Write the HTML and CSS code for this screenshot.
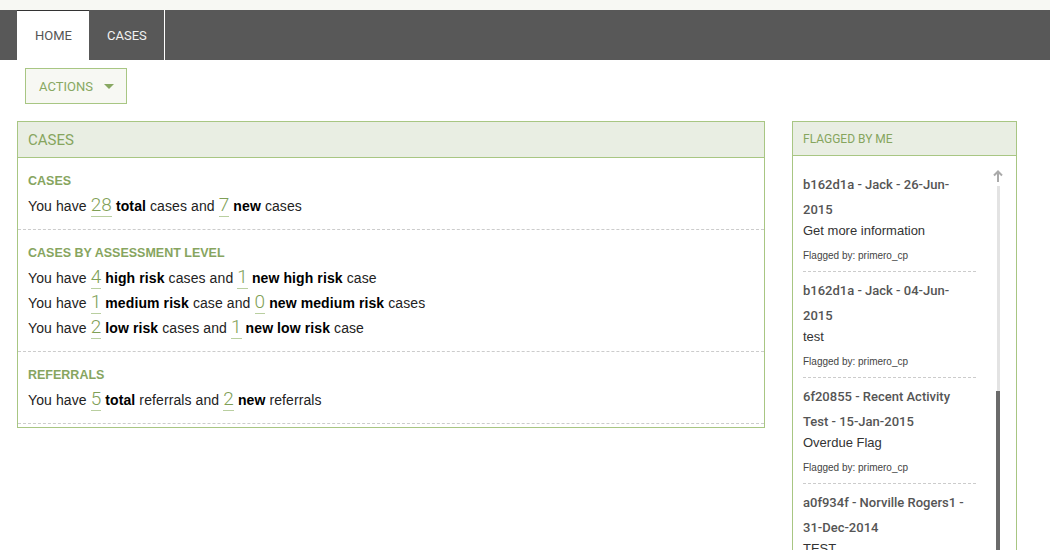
FILE: index.html
```html
<!DOCTYPE html>
<html lang="en">
<head>
<meta charset="utf-8">
<title>Dashboard</title>
<link rel="stylesheet" href="styles.css">
</head>
<body>
<div class="topband"></div>
<nav class="nav">
  <a class="tab active" href="#">HOME</a>
  <a class="tab" href="#">CASES</a>
</nav>
<div class="toolbar">
  <button class="actions" type="button">ACTIONS <span class="caret"></span></button>
</div>
<main class="dash">
  <section class="panel cases-panel">
    <header class="panel-head">CASES</header>
    <div class="stat">
      <h3>CASES</h3>
      <p>You have <span class="num">28</span> <b>total</b> cases and <span class="num">7</span> <b>new</b> cases</p>
    </div>
    <div class="stat">
      <h3>CASES BY ASSESSMENT LEVEL</h3>
      <p>You have <span class="num">4</span> <b>high risk</b> cases and <span class="num">1</span> <b>new high risk</b> case</p>
      <p>You have <span class="num">1</span> <b>medium risk</b> case and <span class="num">0</span> <b>new medium risk</b> cases</p>
      <p>You have <span class="num">2</span> <b>low risk</b> cases and <span class="num">1</span> <b>new low risk</b> case</p>
    </div>
    <div class="stat">
      <h3>REFERRALS</h3>
      <p>You have <span class="num">5</span> <b>total</b> referrals and <span class="num">2</span> <b>new</b> referrals</p>
    </div>
  </section>
  <section class="panel flag-panel">
    <header class="panel-head small">FLAGGED BY ME</header>
    <div class="flag-body">
      <div class="flag-item">
        <div class="flag-title">b162d1a - Jack - 26-Jun-2015</div>
        <div class="flag-desc">Get more information</div>
        <div class="flag-by">Flagged by: primero_cp</div>
      </div>
      <div class="flag-item">
        <div class="flag-title">b162d1a - Jack - 04-Jun-2015</div>
        <div class="flag-desc">test</div>
        <div class="flag-by">Flagged by: primero_cp</div>
      </div>
      <div class="flag-item">
        <div class="flag-title">6f20855 - Recent Activity Test - 15-Jan-2015</div>
        <div class="flag-desc">Overdue Flag</div>
        <div class="flag-by">Flagged by: primero_cp</div>
      </div>
      <div class="flag-item">
        <div class="flag-title">a0f934f - Norville Rogers1 - 31-Dec-2014</div>
        <div class="flag-desc">TEST</div>
        <div class="flag-by">Flagged by: primero_cp</div>
      </div>
      <div class="scroll">
        <svg class="arrow" width="10" height="12" viewBox="0 0 10 12"><path d="M1 5.5 L5 1.5 L9 5.5 M5 1.5 V12" fill="none" stroke="#aaaaaa" stroke-width="2"/></svg>
        <div class="track"></div>
        <div class="thumb"></div>
      </div>
    </div>
  </section>
</main>
</body>
</html>
```
FILE: styles.css
```css
html, body {
  overflow: hidden;
}
body {
  margin: 0;
  font-family: "Liberation Sans", Arial, sans-serif;
  color: #222;
  background: #fff;
}
.topband {
  height: 10px;
  background: #f7f8f3;
}
.nav {
  display: flex;
  height: 50px;
  background: #585858;
  padding-left: 17px;
  font-family: Roboto, "Liberation Sans", sans-serif;
  font-size: 13px;
}
.tab {
  display: block;
  padding: 1px 17px 0 18px;
  line-height: 49px;
  color: #f2f2f2;
  text-decoration: none;
}
.tab.active {
  background: #fff;
  color: #555;
  border-top: 1px solid #333;
  line-height: 48px;
}
.tab + .tab {
  border-right: 1px solid #fff;
}
.toolbar {
  padding: 8px 0 0 25px;
}
.actions {
  box-sizing: border-box;
  display: flex;
  align-items: center;
  height: 36px;
  width: 102px;
  padding: 0 0 0 13px;
  border: 1px solid #a8c683;
  background: #f7f8f3;
  color: #88a862;
  font-family: Roboto, "Liberation Sans", sans-serif;
  font-size: 13px;
}
.caret {
  margin-left: 11px;
  width: 0;
  height: 0;
  border-left: 5px solid transparent;
  border-right: 5px solid transparent;
  border-top: 5px solid #88a862;
}
.dash {
  display: flex;
  align-items: flex-start;
  gap: 27px;
  padding: 17px 0 0 17px;
}
.panel {
  box-sizing: border-box;
  border: 1px solid #a8c683;
}
.cases-panel {
  width: 748px;
  padding-bottom: 3px;
}
.panel-head {
  box-sizing: border-box;
  background: #e9eee3;
  border-bottom: 1px solid #a8c683;
  color: #86a55e;
  font-family: Roboto, "Liberation Sans", sans-serif;
  font-size: 15px;
  height: 36px;
  padding: 1px 0 0 10px;
  line-height: 34px;
}
.panel-head.small {
  font-size: 12px;
  height: 34px;
  line-height: 32px;
}
.stat {
  padding: 15px 10px 10px;
  border-bottom: 1px dashed #ccc;
}
.stat h3 {
  margin: 0 0 5px;
  font-size: 12.5px;
  line-height: 16px;
  color: #87a55f;
  font-weight: bold;
}
.stat p {
  margin: 0;
  font-size: 14px;
  line-height: 25px;
  letter-spacing: 0.1px;
}
.stat b {
  color: #000;
}
.num {
  font-family: Roboto, "Liberation Sans", sans-serif;
  font-weight: 300;
  font-size: 19px;
  line-height: 1;
  color: #7f9f57;
  border-bottom: 1px solid #b9cfa0;
}
.flag-panel {
  width: 225px;
}
.flag-body {
  position: relative;
  height: 430px;
  overflow: hidden;
  padding: 10px 0 0 10px;
}
.flag-item {
  width: 173px;
  padding: 6px 0 8px;
  border-bottom: 1px dashed #ccc;
}
.flag-title {
  font-family: Roboto, "Liberation Sans", sans-serif;
  font-weight: 500;
  font-size: 13px;
  line-height: 25px;
  color: #555;
}
.flag-desc {
  font-size: 13px;
  line-height: 17px;
  color: #333;
}
.flag-by {
  margin-top: 10px;
  font-size: 10px;
  line-height: 14px;
  color: #444;
}
.scroll {
  position: absolute;
  top: 14px;
  right: 16px;
  bottom: 0;
  width: 4px;
}
.arrow {
  position: absolute;
  top: 0;
  left: -3px;
}
.track {
  position: absolute;
  top: 16px;
  bottom: 0;
  left: 1px;
  width: 3px;
  background: #e3e3e3;
}
.thumb {
  position: absolute;
  top: 221px;
  bottom: 0;
  left: 0;
  width: 4px;
  background: #6b6b6b;
}
```
